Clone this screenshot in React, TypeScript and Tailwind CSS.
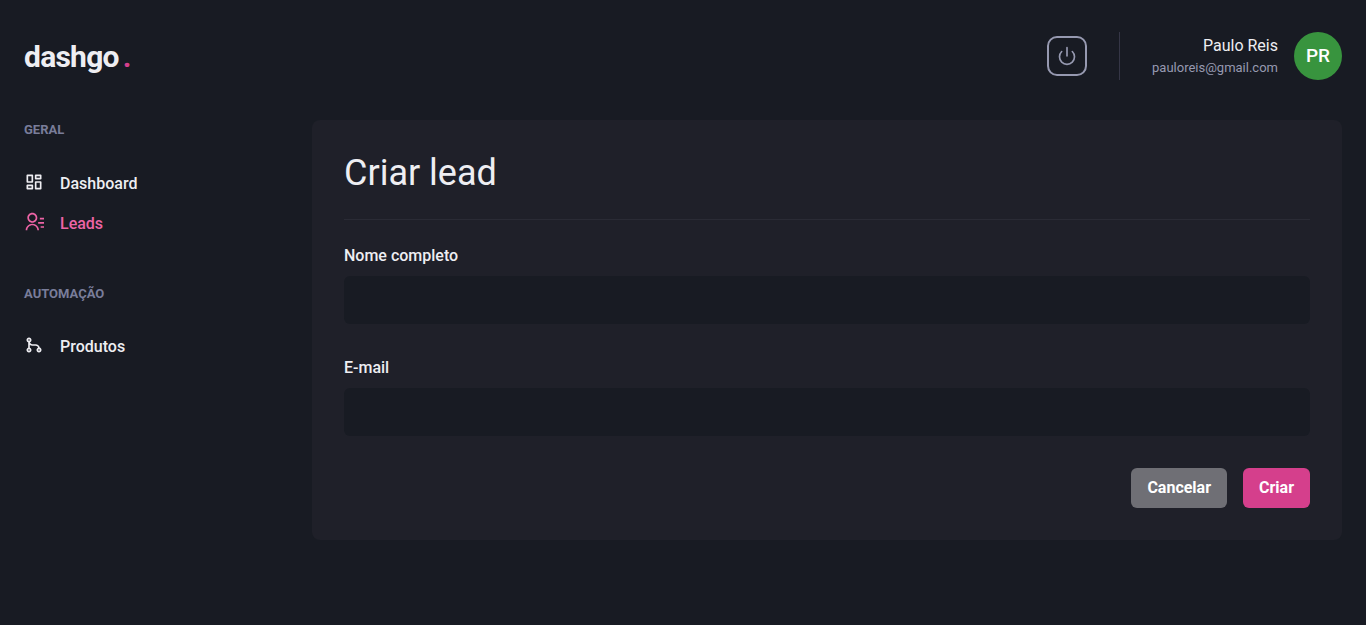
import type { ReactNode } from "react";
import { FiPower } from "react-icons/fi";
import { RiContactsLine, RiDashboardLine, RiGitMergeLine } from "react-icons/ri";

function NavSection({ title, children }: { title: string; children: ReactNode }) {
  return (
    <section>
      <h2 className="text-[13px] leading-normal font-bold uppercase text-[#797D9A]">{title}</h2>
      <ul className="mt-8 flex flex-col gap-4">{children}</ul>
    </section>
  );
}

function NavLink({ icon, label, active }: { icon: ReactNode; label: string; active?: boolean }) {
  return (
    <li>
      <a href="#" className={active ? "flex items-start gap-4 text-[#ED64A6]" : "flex items-start gap-4 text-[#EEEEF2]"}>
        {icon}
        <span className="font-medium">{label}</span>
      </a>
    </li>
  );
}

function Field({ id, label, type }: { id: string; label: string; type: string }) {
  return (
    <div>
      <label htmlFor={id} className="mb-2 block font-medium">{label}</label>
      <input id={id} name={id} type={type} className="block h-12 w-full rounded-md bg-[#181B23] px-4 outline-none focus:ring-2 focus:ring-[#D53F8C]" />
    </div>
  );
}

export default function App() {
  return (
    <div className="min-h-screen bg-[#181B23] font-[Roboto,sans-serif] text-base text-[#EEEEF2]">
      <header className="flex items-center justify-between px-6 pt-8">
        <a href="#" className="text-3xl leading-normal font-bold tracking-tight">
          dashgo<span className="ml-1 text-[#D53F8C]">.</span>
        </a>
        <div className="flex items-center">
          <button type="button" aria-label="Sair" className="flex size-10 items-center justify-center rounded-[10px] border-2 border-[#9699B0] text-[#9699B0]">
            <FiPower size={20} />
          </button>
          <div className="ml-8 flex h-12 items-center gap-4 border-l border-[#353646] pl-8">
            <div className="text-right">
              <p className="leading-6">Paulo Reis</p>
              <p className="text-[13px] leading-5 text-[#9699B0]">pauloreis@gmail.com</p>
            </div>
            <div className="flex size-12 items-center justify-center rounded-full bg-[#38943E] text-[19px] font-medium text-white">PR</div>
          </div>
        </div>
      </header>
      <div className="flex px-6 pt-10">
        <aside className="mr-8 w-64 shrink-0">
          <nav className="flex flex-col gap-12">
            <NavSection title="Geral">
              <NavLink icon={<RiDashboardLine size={20} />} label="Dashboard" />
              <NavLink icon={<RiContactsLine size={20} />} label="Leads" active />
            </NavSection>
            <NavSection title="Automação">
              <NavLink icon={<RiGitMergeLine size={20} />} label="Produtos" />
            </NavSection>
          </nav>
        </aside>
        <main className="flex-1 rounded-lg bg-[#1F2029] p-8">
          <h1 className="text-4xl leading-[1.2]">Criar lead</h1>
          <hr className="my-6 border-[#2A2B35]" />
          <form>
            <div className="flex flex-col gap-8">
              <Field id="name" label="Nome completo" type="text" />
              <Field id="email" label="E-mail" type="email" />
            </div>
            <div className="mt-8 flex justify-end gap-4">
              <button type="button" className="h-10 rounded-md bg-[#6F6F75] px-4 font-bold text-white">Cancelar</button>
              <button type="submit" className="h-10 rounded-md bg-[#D53F8C] px-4 font-bold text-white">Criar</button>
            </div>
          </form>
        </main>
      </div>
    </div>
  );
}
